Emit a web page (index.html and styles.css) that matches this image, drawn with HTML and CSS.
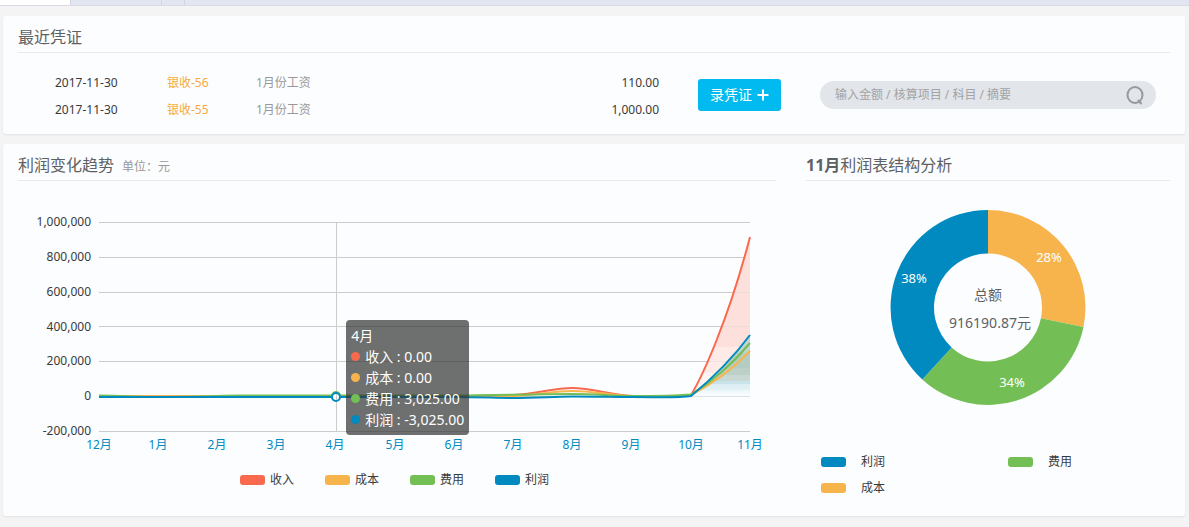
FILE: index.html
```html
<!DOCTYPE html>
<html lang="zh-CN">
<head>
<meta charset="utf-8">
<title>首页</title>
<link rel="stylesheet" href="styles.css">
</head>
<body>
<nav class="tabs"><span class="tab tab-active"></span><span class="tab tab-wide"></span><span class="tab tab-small"></span></nav>
<main class="page">
  <section class="panel">
    <h2 class="title">最近凭证</h2>
    <div class="recent">
      <table class="vouchers">
        <tbody>
          <tr><td class="date">2017-11-30</td><td class="number"><a href="#">银收-56</a></td><td class="summary">1月份工资</td><td class="amount">110.00</td></tr>
          <tr><td class="date">2017-11-30</td><td class="number"><a href="#">银收-55</a></td><td class="summary">1月份工资</td><td class="amount">1,000.00</td></tr>
        </tbody>
      </table>
      <button class="add" type="button">录凭证
        <svg width="12" height="12" viewBox="0 0 12 12" aria-hidden="true"><path d="M6 0.5V11.5M0.5 6H11.5" stroke="#fff" stroke-width="2"/></svg>
      </button>
      <form class="search">
        <input class="search-input" type="text" aria-label="搜索凭证" placeholder="输入金额 / 核算项目 / 科目 / 摘要">
        <button class="search-button" type="button" aria-label="搜索">
          <svg width="20" height="20" viewBox="0 0 20 20" fill="none" stroke="#97999b" stroke-width="2" aria-hidden="true"><ellipse cx="10" cy="10" rx="7.500" ry="8"/><path d="M13 15L16.500 19"/></svg>
        </button>
      </form>
    </div>
  </section>

  <section class="panel analysis">
    <div class="trend">
      <h2 class="title">利润变化趋势<span class="unit">单位：元</span></h2>
      <div class="plot">
        <svg class="chart" viewBox="0 0 758 275" role="img" aria-label="利润变化趋势">
          <defs>
            <linearGradient id="income" gradientUnits="userSpaceOnUse" x1="0" y1="56" x2="0" y2="216">
              <stop offset="0" stop-color="#fde0db"/><stop offset="0.69" stop-color="#fde0db"/>
              <stop offset="0.69" stop-color="#feebe7"/><stop offset="0.85" stop-color="#feebe7"/>
              <stop offset="0.85" stop-color="#fff3f0"/><stop offset="1" stop-color="#fff8f6"/>
            </linearGradient>
            <linearGradient id="profit" gradientUnits="userSpaceOnUse" x1="0" y1="154" x2="0" y2="214">
              <stop offset="0" stop-color="#cbd5d5"/><stop offset="0.3" stop-color="#bfd2cd"/>
              <stop offset="0.3" stop-color="#b5cdc1"/><stop offset="0.55" stop-color="#b5cdc1"/>
              <stop offset="0.55" stop-color="#bdd0c8"/><stop offset="0.67" stop-color="#bdd0c8"/>
              <stop offset="0.67" stop-color="#c9d7d5"/><stop offset="0.77" stop-color="#c9d7d5"/>
              <stop offset="0.77" stop-color="#c8e3ea"/><stop offset="0.82" stop-color="#c8e3ea"/>
              <stop offset="0.82" stop-color="#dceef3"/><stop offset="0.92" stop-color="#e2f1f5"/>
              <stop offset="0.92" stop-color="#ecf6f9"/><stop offset="1" stop-color="#f8fcfe"/>
            </linearGradient>
          </defs>
          <path class="grid" d="M81 41.5H732M81 76.5H732M81 111.5H732M81 145.5H732M81 180.5H732M81 215.5H673M81 250.5H732M318.5 41.5V250.5"/>
          <path d="M673 215.5H732" stroke="#dfe1e4"/>
          <path d="M673 214C684 196 710 140 732 56V215H673Z" fill="url(#income)"/>
          <path d="M673 215C690 201 712 181 732 154V215H673Z" fill="url(#profit)"/>
          <path class="grid faint" d="M712 111.5H732M703 145.5H732M690 180.5H732"/>
          <g class="series">
            <path stroke="#f8694d" d="M81 215.500H436C460 215 480 214.500 495 214C520 213 535 207 554 207C575 207 592 214 614 215C640 215.500 660 216 673 214C684 196 710 140 732 56"/>
            <path stroke="#f8b44c" d="M81 215H495C520 214 535 210 554 210C575 210 592 214 614 215C640 216 660 215 673 214C690 205 712 191 732 170"/>
            <path stroke="#74bf55" d="M81 214.500C110 214.500 110 216 150 216C190 216 190 214.500 220 214.500H436C480 214.500 510 213 554 213C580 213 592 215 614 215C640 215 660 214.500 673 213.500C690 203 712 186 732 162"/>
            <path stroke="#008abf" d="M81 216H436C460 216 480 217 495 217C520 217 535 215.500 554 215.500C580 215.500 592 216 614 216C640 216 660 217 673 215C690 201 712 181 732 154"/>
          </g>
          <circle cx="318" cy="215" r="4" fill="#fff" stroke="#74bf55" stroke-width="2"/>
          <circle cx="318" cy="216" r="4" fill="#fff" stroke="#008abf" stroke-width="2"/>
          <path d="M318.500 213V219" stroke="#ccc"/>
          <g class="axis-y">
            <text x="73" y="45">1,000,000</text><text x="73" y="80">800,000</text><text x="73" y="115">600,000</text><text x="73" y="150">400,000</text><text x="73" y="184">200,000</text><text x="73" y="219">0</text><text x="73" y="254">-200,000</text>
          </g>
          <g class="axis-x">
            <text x="81" y="268">12月</text><text x="140" y="268">1月</text><text x="199" y="268">2月</text><text x="258" y="268">3月</text><text x="317" y="268">4月</text><text x="377" y="268">5月</text><text x="436" y="268">6月</text><text x="495" y="268">7月</text><text x="554" y="268">8月</text><text x="613" y="268">9月</text><text x="673" y="268">10月</text><text x="732" y="268">11月</text>
          </g>
        </svg>
        <div class="tooltip">
          <div>4月</div>
          <div class="tip-row"><i class="dot red"></i>收入 : 0.00</div>
          <div class="tip-row"><i class="dot orange"></i>成本 : 0.00</div>
          <div class="tip-row"><i class="dot green"></i>费用 : 3,025.00</div>
          <div class="tip-row"><i class="dot blue"></i>利润 : -3,025.00</div>
        </div>
      </div>
      <ul class="legend">
        <li><i class="swatch red"></i>收入</li>
        <li><i class="swatch orange"></i>成本</li>
        <li><i class="swatch green"></i>费用</li>
        <li><i class="swatch blue"></i>利润</li>
      </ul>
    </div>

    <div class="structure">
      <h2 class="title"><b>11月</b>利润表结构分析</h2>
      <svg class="chart" viewBox="0 0 364 260" role="img" aria-label="利润表结构分析">
        <path fill="#f8b44c" d="M182 29A97.500 97.500 0 0 1 277.500 145.900L234.900 137.300A54 54 0 0 0 182 72.500Z"/>
        <path fill="#74bf55" d="M277.500 145.900A97.500 97.500 0 0 1 116.300 198.500L145.600 166.400A54 54 0 0 0 234.900 137.300Z"/>
        <path fill="#008abf" d="M116.300 198.500A97.500 97.500 0 0 1 182 29V72.500A54 54 0 0 0 145.600 166.400Z"/>
        <g class="share"><text x="243" y="81">28%</text><text x="108" y="102">38%</text><text x="206" y="206">34%</text></g>
        <g class="total"><text x="182" y="119">总额</text><text x="184" y="147">916190.87元</text></g>
      </svg>
      <ul class="parts">
        <li><i class="swatch blue"></i>利润</li>
        <li><i class="swatch green"></i>费用</li>
        <li><i class="swatch orange"></i>成本</li>
      </ul>
    </div>
  </section>
</main>
</body>
</html>
```

FILE: styles.css
```css
* { box-sizing: border-box; }

body {
  margin: 0;
  background: #f4f4f4;
  color: #3a3a3a;
  font: 12px/24px "Noto Sans", "Noto Sans CJK SC", sans-serif;
}

ul { margin: 0; padding: 0; list-style: none; }

a { color: inherit; text-decoration: none; }

button, input { font: inherit; border: 0; padding: 0; }

.tabs {
  display: flex;
  height: 6px;
  background: #e2e6f0;
  border-bottom: 1px solid #d8dbe5;
}

.tab { border-right: 1px solid #d2d6e4; }
.tab-active { width: 71px; background: #fff; }
.tab-wide { width: 91px; }
.tab-small { width: 23px; }

.page {
  display: flex;
  flex-direction: column;
  gap: 10px;
  padding: 10px 4px 10px 3px;
}

.panel {
  padding: 0 15px;
  background: #fcfdff;
  border-radius: 3px;
  box-shadow: 0 1px 2px rgba(0, 0, 0, 0.08);
}

.title {
  margin: 0;
  height: 37px;
  padding-top: 2px;
  border-bottom: 1px solid #e8e9eb;
  color: #5e6164;
  font-size: 16px;
  font-weight: 400;
  line-height: 38px;
}

.unit {
  margin-left: 8px;
  color: #999;
  font-family: "Noto Sans", "Noto Sans CJK TC", sans-serif;
  font-size: 12px;
}

.recent {
  display: flex;
  align-items: center;
  gap: 39px;
  padding: 16px 14px 11px 37px;
}

.vouchers { flex: 1; border-collapse: collapse; }
.vouchers td { height: 27px; padding: 0; }
.date { width: 112px; }
.number { width: 89px; color: #f8a93c; }
.summary { color: #999; }
.amount { text-align: right; }

.add {
  display: flex;
  align-items: center;
  justify-content: center;
  gap: 5px;
  width: 83px;
  height: 32px;
  margin-top: -2px;
  border-radius: 3px;
  background: #00baf0;
  color: #fff;
  font-size: 14px;
}

.search {
  display: flex;
  align-items: center;
  width: 336px;
  height: 28px;
  margin-top: -2px;
  padding: 0 11px 0 15px;
  border-radius: 14px;
  background: #e2e5ea;
}

.search-input { flex: 1; min-width: 0; background: none; outline: 0; }
.search-input::placeholder { color: #a3a3a3; opacity: 1; }
.search-button { display: flex; background: none; }

.analysis {
  display: grid;
  grid-template-columns: 758fr 364fr;
  gap: 30px;
}

.plot { position: relative; }
.chart { display: block; width: 100%; }

.grid { fill: none; stroke: #ccc; }
.faint { opacity: 0.3; }
.series { fill: none; stroke-width: 2; stroke-linejoin: round; }
.axis-y { fill: #3a3a3a; text-anchor: end; }
.axis-x { fill: #008abf; text-anchor: middle; }
.share { fill: #fff; font-size: 13px; text-anchor: middle; }
.total { fill: #5e6164; font-size: 14px; text-anchor: middle; }

.tooltip {
  position: absolute;
  left: 43.3%;
  top: 50.5%;
  padding: 5px;
  border-radius: 4px;
  background: rgba(50, 50, 50, 0.7);
  color: #fff;
  font-size: 14px;
  line-height: 21px;
  white-space: nowrap;
}

.tip-row { display: flex; align-items: center; gap: 5px; }
.dot { width: 9px; height: 9px; border-radius: 50%; }
.swatch { width: 25px; height: 10px; border-radius: 3px; }

.red { background: #f8694d; }
.orange { background: #f8b44c; }
.green { background: #74bf55; }
.blue { background: #008abf; }

.legend {
  display: flex;
  justify-content: center;
  gap: 31px;
  padding: 12px 5px 24px 0;
}

.legend li { display: flex; align-items: center; gap: 5px; }

.parts {
  display: grid;
  grid-template-columns: 187fr 162fr;
  padding: 8px 0 15px 15px;
  line-height: 26px;
}

.parts li { display: flex; align-items: center; gap: 15px; }
```
